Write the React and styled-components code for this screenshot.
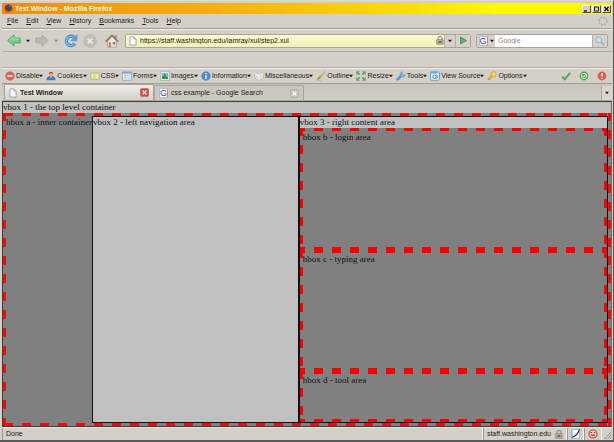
import React from 'react'
import styled, { createGlobalStyle, css } from 'styled-components'

const GlobalStyle = createGlobalStyle`
* {
  box-sizing: border-box;
}
body {
  margin: 0;
  background: #d4d0c8;
  font-family: "Liberation Sans", Arial, sans-serif;
  font-size: 7px;
  line-height: 10px;
  color: #1c1a18;
}
button, input {
  font: inherit;
  color: inherit;
  margin: 0;
  padding: 0;
  border: 0;
  background: none;
}
`

const Window = styled.div`
display: flex;
flex-direction: column;
min-height: 100vh;
padding: 2px 1px 0 2px;
background: #d4d0c8;
border-top: 1px solid #dcdad6;
border-right: 1px solid #55524e;
border-bottom: 2px solid #5c5856;
white-space: nowrap;
overflow: hidden;
`

const TitleBar = styled.header`
display: flex;
align-items: center;
gap: 2px;
height: 11px;
padding: 0 1px 0 2px;
background: linear-gradient(90deg, #ee8c14, #f5b010 35%, #fadc08 66%, #fffa00 82%);
color: #fff6dc;
font-weight: bold;
`

const TitleText = styled.span`
flex: 1;
`

const CaptionButtons = styled.div`
display: flex;
gap: 1px;
`

const CaptionButton = styled.button`
display: flex;
width: 9px;
height: 8px;
background: #d4d0c8;
border: 1px solid;
border-color: #fff #504c48 #504c48 #fff;
`

const MenuBar = styled.nav`
display: flex;
align-items: center;
gap: 8px;
height: 15px;
padding: 0 4px 0 5px;
border-bottom: 1px solid #a09c96;
`

const MenuButton = styled.button`
&::first-letter {
  text-decoration: underline;
}
`

const Throbber = styled.span`
display: flex;
margin-left: auto;
`

const NavBar = styled.div`
display: flex;
align-items: center;
height: 23px;
padding: 0 4px;
border-top: 1px solid #f2f0ec;
border-bottom: 1px solid #b0aca6;
`

const NavButton = styled.button`
display: flex;
justify-content: center;
width: ${props => props.$width || 22}px;
`

const NavArrow = styled.button`
display: flex;
justify-content: center;
width: 13px;
color: ${props => props.$faded ? '#8c8882' : '#1c1a18'};
`

const Field = styled.div`
display: flex;
align-items: center;
height: 14px;
border: 1px solid #a8a49c;
border-radius: 2px;
background: ${props => props.$color};
${props => props.$grow ? css`
  flex: 1;
  margin: 0 5px 0 2px;
` : css`
  width: 132px;
`}
`

const FieldInput = styled.input`
flex: 1;
min-width: 0;
height: 12px;
padding-left: 3px;
outline: none;
&::placeholder {
  color: #8c8c8c;
  opacity: 1;
}
`

const FieldIcon = styled.span`
display: flex;
padding-left: 3px;
`

const FieldButton = styled.button`
display: flex;
align-items: center;
justify-content: center;
gap: 2px;
width: ${props => props.$width}px;
height: 12px;
background: #d6d2ca;
border-left: ${props => props.$first ? 0 : 1}px solid #b4b0a8;
`

const EmptyBar = styled.div`
height: 16px;
border-bottom: 1px solid #b0aca6;
`

const DevBar = styled.div`
display: flex;
align-items: center;
gap: 3px;
height: 16px;
padding: 0 5px 0 3px;
border-top: 1px solid #f2f0ec;
border-bottom: 1px solid #a09c96;
`

const DevButton = styled.button`
display: flex;
align-items: center;
gap: 1px;
`

const DevLabel = styled.span`
display: flex;
align-items: center;
`

const DevStatus = styled.div`
display: flex;
gap: 8px;
margin-left: auto;
`

const TabBar = styled.div`
display: flex;
align-items: flex-end;
height: 17px;
padding-left: 2px;
background: linear-gradient(#c8c4bc, #d0ccc4);
border-bottom: 1px solid #b0aca4;
`

const Tab = styled.div`
display: flex;
align-items: center;
width: 150px;
height: ${props => props.$active ? 16 : 15}px;
padding: 0 4px;
border: 1px solid #a8a49c;
border-bottom: 0;
border-radius: 2px 2px 0 0;
background: ${props => props.$active ? 'linear-gradient(#f0eeea, #d4d0c8)' : '#ccc8c0'};
font-weight: ${props => props.$active ? 'bold' : 'normal'};
`

const TabLabel = styled.button`
display: flex;
align-items: center;
gap: 3px;
flex: 1;
`

const TabClose = styled.button`
display: flex;
`

const TabList = styled.button`
display: flex;
align-items: center;
justify-content: center;
width: 11px;
height: 14px;
margin-left: auto;
background: #dad6ce;
border-left: 1px solid #b0aca4;
`

const GoogleMark = styled.span`
width: 9px;
height: 10px;
background: #fff;
border: 1px solid #b0bcd8;
border-right-color: #d88478;
color: #2848a8;
font-size: 9px;
line-height: 8px;
font-weight: normal;
text-align: center;
`

const Page = styled.main`
display: flex;
flex-direction: column;
flex: 1;
border: 1px solid #3c3c3c;
border-right-color: #6c6c6c;
background: #c0c0c0;
color: #101010;
font-family: "Liberation Serif", "Times New Roman", serif;
font-size: 9px;
line-height: 13px;
`

const BoxText = styled.div`
height: 11px;
line-height: 11px;
`

const dash = (deg, color) => `linear-gradient(${deg}deg, ${color} 50%, transparent 50%)`

/* long dashes, drawn as 18px tiles along each side */
const Hbox = styled.section`
display: flex;
min-height: 0;
flex: ${props => props.$flex || 1} 1 0;
padding: 3px;
background-color: #808080;
background-image: ${props => {
  const c = props.$color || '#f80000'
  return [dash(90, c), dash(90, c), dash(180, c), dash(180, c)].join(', ')
}};
background-size: 18px 3px, 18px 3px, 3px 18px, 3px 18px;
background-repeat: repeat-x, repeat-x, repeat-y, repeat-y;
background-position: ${props => `${props.$phase}px 0, ${props.$phase}px 100%, 0 -1px, 100% -1px`};
`

const SideText = styled.div`
flex: none;
width: 86px;
`

const Vbox = styled.section`
display: flex;
flex-direction: column;
flex: ${props => props.$flex} 1 0;
min-width: 0;
border: 1px solid #101010;
background: #c0c0c0;
`

const StatusBar = styled.footer`
display: flex;
align-items: stretch;
height: 13px;
border-top: 1px solid #e8e6e2;
`

const StatusPanel = styled.div`
display: flex;
align-items: center;
gap: 4px;
padding: 0 3px;
border-left: 1px solid #9c9890;
border-right: 1px solid #f4f2ee;
flex: ${props => props.$grow ? 1 : 'none'};
`

const Caret = () => (
  <svg width="4" height="4" viewBox="0 0 5 4" fill="currentColor" aria-hidden="true">
    <path d="M0 0.500h5L2.500 3.500z" />
  </svg>
)

const FirefoxIcon = () => (
  <svg width="9" height="9" viewBox="0 0 9 9">
    <circle cx="4.5" cy="4.5" r="4.3" fill="#d85c10" />
    <circle cx="4.8" cy="3.8" r="3.1" fill="#304878" />
    <path d="M1 1.2C.3 4 1.3 6.4 3.6 6.6 5.2 6.7 6 6 6.3 5c-1 .4-2.4.3-2.8-.8L2 3.600z" fill="#803010" />
    <path d="M5 1.500l2 .4-1 1z" fill="#90b0d8" />
  </svg>
)

const PageIcon = () => (
  <svg width="8" height="10" viewBox="0 0 8 10">
    <path d="M.9.900h4l2.200 2.200v6H.9z" fill="#f8fafc" stroke="#8c98a8" strokeWidth=".8" />
    <path d="M4.900.900v2.200h2.200" fill="#c8d4e4" stroke="#8c98a8" strokeWidth=".6" />
  </svg>
)

const Arrow = ({ back }) => (
  <svg width="14" height="13" viewBox="0 0 14 13">
    {back
      ? <path d="M.7 6.500L7 .9v3.200h6.200v4.800H7v3.200z" fill="#70d088" stroke="#48a060" strokeWidth=".9" />
      : <path d="M13.300 6.500L7 .9v3.200H.8v4.800H7v3.200z" fill="#bcbab6" stroke="#a8a6a2" strokeWidth=".9" />}
    {back && <path d="M3 6.200l3.200-2.800v1.700h6" fill="none" stroke="#b0ecc0" strokeWidth=".8" />}
  </svg>
)

const ReloadIcon = () => (
  <svg width="14" height="14" viewBox="0 0 14 14" fill="none">
    <path d="M10.900 9.500A4.700 4.700 0 1 1 10 3.200" stroke="#3c88c8" strokeWidth="3.200" />
    <path d="M10.800 9.600A4.700 4.700 0 1 1 9.600 3" stroke="#78bcec" strokeWidth="1.600" />
    <path d="M12.900.800v6H7z" fill="#58a4dc" stroke="#3c88c8" strokeWidth=".5" />
  </svg>
)

const StopIcon = () => (
  <svg width="14" height="14" viewBox="0 0 14 14">
    <circle cx="7" cy="7" r="6.200" fill="#c2c0bc" stroke="#b4b2ae" strokeWidth=".8" />
    <path d="M4.600 4.600l4.800 4.800M9.400 4.600L4.600 9.400" stroke="#ecebe8" strokeWidth="1.600" />
  </svg>
)

const HomeIcon = () => (
  <svg width="14" height="14" viewBox="0 0 14 14">
    <path d="M2.600 7L7 2.600 11.400 7v6.200H2.600z" fill="#ece6dc" stroke="#908880" strokeWidth=".6" />
    <path d="M9.800 1.200h1.700v3.400L9.800 3z" fill="#a87868" />
    <path d="M.7 7.600L7 1.300l6.300 6.300" fill="none" stroke="#887068" strokeWidth="1.500" />
    <path d="M3.800 8.200h2v5h-2z" fill="#b87860" />
    <path d="M7.800 8h2.400v2.600H7.800z" fill="#a8785c" />
  </svg>
)

const LockIcon = () => (
  <svg width="8" height="9" viewBox="0 0 8 9">
    <path d="M2 4V2.500a2 2 0 0 1 4 0V4" fill="none" stroke="#8c8a80" strokeWidth="1.100" />
    <path d="M.7 3.600h6.600v4.700H.7z" fill="#b8b49c" stroke="#74726a" strokeWidth=".5" />
    <path d="M2.500 5.200h3v1.600h-3z" fill="#5c5a54" />
  </svg>
)

const GoIcon = () => (
  <svg width="9" height="9" viewBox="0 0 9 9">
    <path d="M1.500 1l6 3.500-6 3.500z" fill="#58b078" stroke="#388858" strokeWidth=".8" />
  </svg>
)

const SearchIcon = () => (
  <svg width="10" height="10" viewBox="0 0 10 10">
    <path d="M5.800 5.800L9 9" stroke="#a8a49c" strokeWidth="1.600" />
    <circle cx="3.800" cy="3.800" r="2.900" fill="#cce0f0" stroke="#98acc0" strokeWidth=".9" />
  </svg>
)

const ThrobberIcon = () => (
  <svg width="10" height="10" viewBox="0 0 10 10">
    <circle cx="5" cy="5" r="3.800" fill="none" stroke="#aaa8a4" strokeWidth="1.700" strokeDasharray="1.700 1.280" />
  </svg>
)

const CloseIcon = ({ active }) => (
  <svg width="9" height="9" viewBox="0 0 9 9">
    <rect x=".4" y=".4" width="8.200" height="8.200" rx="1.500" fill={active ? '#d84848' : '#c4c0ba'} stroke={active ? '#b06058' : '#a8a49e'} strokeWidth=".6" />
    <path d="M2.600 2.600l3.800 3.800M6.400 2.600L2.600 6.400" stroke="#fff" strokeWidth="1.300" />
  </svg>
)

const devIcons = {
  Disable: <><circle cx="5" cy="5" r="4.300" fill="#e06050" stroke="#c05048" strokeWidth=".5" /><path d="M2.400 5h5.200" stroke="#fff" strokeWidth="1.500" /></>,
  Cookies: <><path d="M.8 9c0-3 1.500-4 4.200-4s4.200 1 4.200 4z" fill="#4880c8" stroke="#3060a0" strokeWidth=".4" /><circle cx="5" cy="3" r="2.300" fill="#e8b078" /><path d="M2.700 2.900C2.800 0 7.200 0 7.300 2.900 6 2 4.500 2 2.700 2.900z" fill="#906028" /><path d="M4 5.200h2L5 7z" fill="#f0d8b8" /></>,
  CSS: <><rect x=".4" y="1.800" width="9.200" height="6.600" fill="#d8d890" stroke="#b8b870" strokeWidth=".6" /><path d="M4 3.800H2.200v2.600H4M7.800 3.800H6v1.300h1.800v1.300H6" fill="none" stroke="#f8f8dc" strokeWidth=".8" /></>,
  Forms: <><rect x=".6" y=".9" width="8.800" height="8.200" fill="#eef4fc" stroke="#6898d0" strokeWidth=".7" /><path d="M.6.900h8.800v1.800H.6z" fill="#78a8e0" /><path d="M2 4.400h2M2 6.800h2" stroke="#7090b8" strokeWidth=".8" /><path d="M5 3.800h3.300v1.200H5zM5 6.200h3.300v1.200H5z" fill="#a8c8f0" /></>,
  Images: <><rect x=".8" y=".8" width="8.400" height="8.400" fill="#e8f0f0" stroke="#88a0a8" strokeWidth=".6" /><path d="M2 2h6v6H2z" fill="#80b8d8" /><path d="M2 8V5.500L4.500 4 8 6.500V8z" fill="#389048" /><path d="M4 3h2v3H4z" fill="#48a058" /></>,
  Information: <><circle cx="5" cy="5" r="4.300" fill="#4c90dc" stroke="#3870b0" strokeWidth=".5" /><path d="M5 2v1.300M5 4.200v3.600" stroke="#fff" strokeWidth="1.300" /></>,
  Miscellaneous: <><path d="M5 .8l4.200 2v4.400L5 9.300.8 7.200V2.800z" fill="#dce0e0" stroke="#a8b0b0" strokeWidth=".5" /><path d="M.8 2.800L5 4.800l4.200-2M5 4.800v4.500" fill="none" stroke="#f8f8f8" strokeWidth=".9" /><path d="M2.900 1.800l4.200 2" stroke="#b8bcbc" strokeWidth=".7" /></>,
  Outline: <><path d="M9.300.5L5 6 3.800 5z" fill="#f0c050" stroke="#c09030" strokeWidth=".5" /><path d="M3.900 5L5 6C4.500 8.500 2.500 8.800.5 8.600 2 8 2 5.500 3.900 5z" fill="#b88838" /><path d="M.5 9.200h4.500" stroke="#888" strokeWidth=".5" /></>,
  Resize: <g fill="#60a860" stroke="#408848" strokeWidth=".3"><path d="M.5.500h3L2.600 1.500 4 3 3 4 1.500 2.600.500 3.500z" /><path d="M9.500.500h-3l.9 1L6 3l1 1 1.500-1.400 1 .9z" /><path d="M.5 9.500h3l-.9-1L4 7 3 6 1.500 7.400l-1-.9z" /><path d="M9.500 9.500h-3l.9-1L6 7l1-1 1.500 1.400 1-.9z" /></g>,
  Tools: <><path d="M1.600 8.400L6 4" stroke="#6090d0" strokeWidth="2.600" strokeLinecap="round" /><path d="M6.800.7a2.700 2.700 0 1 0 2.600 3L7.600 4 6 2.400z" fill="#88b0e0" stroke="#6088c0" strokeWidth=".4" /></>,
  'View Source': <><rect x=".5" y=".9" width="9" height="8.400" rx=".8" fill="#d8ecfc" stroke="#4890d0" strokeWidth=".8" /><path d="M.5.900h7v1.600h-7z" fill="#60a8e0" /><circle cx="4.500" cy="5.800" r="1.700" fill="#fff" stroke="#3878c0" strokeWidth=".9" /><path d="M6 3.800l2 2-2 2" fill="none" stroke="#3878c0" strokeWidth=".8" /></>,
  Options: <><path d="M5.300 4.500L1 8.800" stroke="#d8a030" strokeWidth="2" /><path d="M2 7.500l1.300 1.300" stroke="#d8a030" strokeWidth="1.200" /><circle cx="6.600" cy="3.300" r="2.800" fill="#f0c850" stroke="#c89830" strokeWidth=".6" /><circle cx="7.300" cy="2.600" r=".8" fill="#fff8e0" /></>
}

const menus = ['File', 'Edit', 'View', 'History', 'Bookmarks', 'Tools', 'Help']

const Google = () => <GoogleMark>G</GoogleMark>

function Browser() {
  return (
    <>
      <TitleBar>
        <FirefoxIcon />
        <TitleText>Test Window - Mozilla Firefox</TitleText>
        <CaptionButtons>
          <CaptionButton aria-label="Minimize">
            <svg width="7" height="6"><path d="M1 5h3" stroke="#000" strokeWidth="1.200" /></svg>
          </CaptionButton>
          <CaptionButton aria-label="Maximize">
            <svg width="7" height="6"><path d="M1.500 1h4v4h-4z" fill="none" stroke="#222" /></svg>
          </CaptionButton>
          <CaptionButton aria-label="Close">
            <svg width="7" height="6"><path d="M1.500 1l4 4M5.500 1l-4 4" stroke="#000" strokeWidth="1.100" /></svg>
          </CaptionButton>
        </CaptionButtons>
      </TitleBar>
      <MenuBar>
        {menus.map((name) => <MenuButton key={name}>{name}</MenuButton>)}
        <Throbber><ThrobberIcon /></Throbber>
      </MenuBar>
      <NavBar>
        <NavButton $width={15} aria-label="Back"><Arrow back /></NavButton>
        <NavArrow aria-label="Back history"><Caret /></NavArrow>
        <NavButton $width={15} aria-label="Forward"><Arrow /></NavButton>
        <NavArrow $faded aria-label="Forward history"><Caret /></NavArrow>
        <NavButton $width={17} aria-label="Reload"><ReloadIcon /></NavButton>
        <NavButton aria-label="Stop"><StopIcon /></NavButton>
        <NavButton aria-label="Home"><HomeIcon /></NavButton>
        <Field $grow $color="linear-gradient(#fafad0, #f2f2b4)">
          <FieldIcon><PageIcon /></FieldIcon>
          <FieldInput aria-label="Address" defaultValue="https://staff.washington.edu/iamray/xul/step2.xul" />
          <LockIcon />
          <FieldButton $width={11} aria-label="Show addresses"><Caret /></FieldButton>
          <FieldButton $width={15} aria-label="Go"><GoIcon /></FieldButton>
        </Field>
        <Field $color="#fff">
          <FieldButton $width={18} $first aria-label="Search engine"><Google /><Caret /></FieldButton>
          <FieldInput aria-label="Search" placeholder="Google" />
          <FieldButton $width={15} aria-label="Search"><SearchIcon /></FieldButton>
        </Field>
      </NavBar>
      <EmptyBar />
      <DevBar>
        {Object.keys(devIcons).map((name) => (
          <DevButton key={name}>
            <svg width="10" height="10" viewBox="0 0 10 10">{devIcons[name]}</svg>
            <DevLabel>{name}<Caret /></DevLabel>
          </DevButton>
        ))}
        <DevStatus>
          <svg width="10" height="10" viewBox="0 0 10 10">
            <path d="M1 5.500l2.800 2.800L9 2" fill="none" stroke="#58a458" strokeWidth="2" />
          </svg>
          <svg width="10" height="10" viewBox="0 0 10 10">
            <circle cx="5" cy="5" r="4.400" fill="#58a858" />
            <circle cx="5" cy="5" r="2.700" fill="none" stroke="#d8f0d8" strokeWidth=".8" />
            <path d="M3.500 5l1.200 1.200L6.800 3.600" fill="none" stroke="#fff" />
          </svg>
          <svg width="10" height="10" viewBox="0 0 10 10">
            <circle cx="5" cy="5" r="4.400" fill="#e85848" />
            <path d="M5 2v3.600M5 6.800v1.300" stroke="#fff" strokeWidth="1.500" />
          </svg>
        </DevStatus>
      </DevBar>
      <TabBar>
        <Tab $active>
          <TabLabel><PageIcon />Test Window</TabLabel>
          <TabClose aria-label="Close tab"><CloseIcon active /></TabClose>
        </Tab>
        <Tab>
          <TabLabel><Google />css example - Google Search</TabLabel>
          <TabClose aria-label="Close tab"><CloseIcon /></TabClose>
        </Tab>
        <TabList aria-label="List all tabs"><Caret /></TabList>
      </TabBar>
    </>
  )
}

export default function App() {
  return (
    <Window>
      <GlobalStyle />
      <Browser />
      <Page>
        <BoxText>vbox 1 - the top level container</BoxText>
        <Hbox $phase={1} $color="#e41010">
          <SideText>hbox a - inner container</SideText>
          <Vbox $flex={2}>
            <BoxText>vbox 2 - left navigation area</BoxText>
          </Vbox>
          <Vbox $flex={3}>
            <BoxText>vbox 3 - right content area</BoxText>
            <Hbox $phase={-4} $flex={13}>hbox b - login area</Hbox>
            <Hbox $phase={-4} $flex={13}>hbox c - typing area</Hbox>
            <Hbox $phase={-4} $flex={5}>hbox d - tool area</Hbox>
          </Vbox>
        </Hbox>
      </Page>
      <StatusBar>
        <StatusPanel $grow>Done</StatusPanel>
        <StatusPanel>staff.washington.edu <LockIcon /></StatusPanel>
        <StatusPanel>
          <svg width="9" height="10" viewBox="0 0 9 10">
            <path d="M.5.500h8v9h-8z" fill="#f4f8fc" stroke="#8098b8" strokeWidth=".5" />
            <path d="M8.500.500C7 5 4.500 7.500.8 8.300" fill="none" stroke="#283850" strokeWidth="1.200" />
            <path d="M1 1v8" stroke="#70a0d8" strokeWidth=".8" />
          </svg>
        </StatusPanel>
        <StatusPanel>
          <svg width="10" height="10" viewBox="0 0 10 10">
            <circle cx="5" cy="5" r="4" fill="#ecd8c8" stroke="#b84838" strokeWidth="1.100" />
            <path d="M2.600 3.500h1.600M5.800 3.500h1.600M2.800 6.200h4.400" stroke="#b03828" strokeWidth="1.200" />
          </svg>
        </StatusPanel>
        <svg width="10" height="12" viewBox="0 0 10 12">
          <path d="M9.500 3.500l-7 7.500M9.500 6.500L5.300 11M9.500 9.300L8 11" stroke="#908c84" />
        </svg>
      </StatusBar>
    </Window>
  )
}
